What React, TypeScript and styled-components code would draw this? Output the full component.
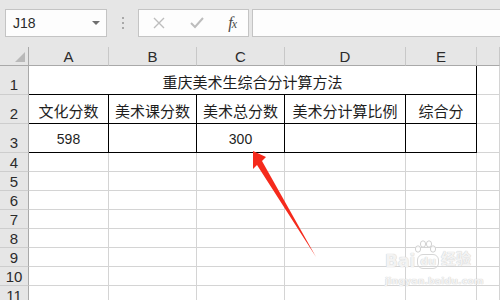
import React from "react";
import styled, { createGlobalStyle } from "styled-components";

const GlobalStyle = createGlobalStyle`
  html, body { margin: 0; padding: 0; background: #ffffff; }
  body { width: 500px; height: 300px; overflow: hidden; font-family: "Liberation Sans", Arial, sans-serif; }
  * { box-sizing: border-box; }
`;

const Page = styled.div`
  position: relative;
  width: 500px;
  height: 300px;
  overflow: hidden;
  display: flex;
  flex-direction: column;
`;

const Toolbar = styled.div`
  height: 47px;
  flex: none;
  background: #e6e6e6;
  display: flex;
  align-items: flex-start;
  padding: 9px 0 0 5px;
`;

const NameBox = styled.div`
  width: 102px;
  height: 28px;
  background: #fdfdfd;
  border: 1px solid #c4c4c4;
  display: flex;
  align-items: center;
  justify-content: space-between;
  padding: 0 6px 0 7px;
  font-size: 14px;
  color: #2a2a2a;
`;

const Caret = styled.span`
  width: 0;
  height: 0;
  border-left: 4px solid transparent;
  border-right: 4px solid transparent;
  border-top: 4px solid #6f6f6f;
`;

const Grip = styled.div`
  width: 31px;
  height: 28px;
  display: flex;
  flex-direction: column;
  align-items: center;
  justify-content: center;
  gap: 3px;
`;

const GripDot = styled.span`
  width: 2px;
  height: 2px;
  background: #a8a8a8;
`;

const FxBox = styled.div`
  width: 111px;
  height: 28px;
  background: #fdfdfd;
  border: 1px solid #c4c4c4;
  display: flex;
  align-items: center;
  justify-content: space-between;
  padding: 0 12px 0 14px;
`;

const FxLabel = styled.span`
  font-family: "Liberation Serif", "Times New Roman", serif;
  font-style: italic;
  font-size: 16px;
  color: #4a4a4a;
  letter-spacing: -1px;
  & > small { font-size: 12px; }
`;

const FormulaInput = styled.div`
  flex: 1;
  height: 28px;
  margin-left: 3px;
  margin-right: -4px;
  background: #fdfdfd;
  border: 1px solid #c4c4c4;
`;

const Sheet = styled.div`
  display: grid;
  grid-template-columns: 29px 80px 88px 88px 121px 71px 1fr;
  grid-template-rows: 19px 29px 29px 29px repeat(8, 19px);
  font-family: "Liberation Sans", Arial, "Noto Sans CJK SC", sans-serif;
`;

const Corner = styled.div`
  position: relative;
  background: #e6e6e6;
  border-right: 1px solid #a9a9a9;
  border-bottom: 1px solid #a9a9a9;
  &::after {
    content: "";
    position: absolute;
    right: 3px;
    bottom: 3px;
    width: 0;
    height: 0;
    border-left: 10px solid transparent;
    border-bottom: 10px solid #b9b9b9;
  }
`;

const ColHead = styled.div`
  background: #e6e6e6;
  border-right: 1px solid #c8c8c8;
  border-bottom: 1px solid #a9a9a9;
  display: flex;
  align-items: center;
  justify-content: center;
  font-size: 15px;
  color: #2b2b2b;
  padding-top: 1px;
`;

const RowHead = styled.div<{ $tall?: boolean }>`
  background: #e6e6e6;
  border-right: 1px solid #a9a9a9;
  border-bottom: 1px solid #cdcdcd;
  display: flex;
  align-items: flex-end;
  justify-content: center;
  font-size: 15px;
  line-height: 17px;
  color: #2b2b2b;
  padding-bottom: ${(p) => (p.$tall ? "1px" : "0")};
`;

const Cell = styled.div<{ $span?: number; $right?: "ink" | "grid"; $bottom?: "ink" | "grid"; $num?: boolean }>`
  grid-column: span ${(p) => p.$span ?? 1};
  background: #ffffff;
  border-right: 1px solid ${(p) => (p.$right === "ink" ? "#000000" : "#d4d4d4")};
  border-bottom: 1px solid ${(p) => (p.$bottom === "ink" ? "#000000" : "#d4d4d4")};
  display: flex;
  align-items: center;
  justify-content: center;
  padding-top: 2px;
  white-space: nowrap;
  color: #1e1e1e;
  font-family: ${(p) =>
    p.$num ? `"Liberation Sans", Arial, sans-serif` : `"Noto Sans CJK SC", "Microsoft YaHei", sans-serif`};
  font-size: ${(p) => (p.$num ? "14px" : "15px")};
`;

const Overlay = styled.svg`
  position: absolute;
  left: 0;
  top: 0;
  pointer-events: none;
`;

const Watermark = styled.div`
  position: absolute;
  left: 385px;
  top: 244px;
  width: 90px;
  display: flex;
  flex-direction: column;
  align-items: flex-start;
  pointer-events: none;
  white-space: nowrap;
  color: rgba(255, 255, 255, 0.75);
  text-shadow: 0 0 1px #cfcfcf, 0 0 1px #cfcfcf;
`;

const MarkRow = styled.div`
  display: flex;
  align-items: flex-end;
  font-family: "DejaVu Sans", sans-serif;
  font-weight: bold;
  font-size: 17px;
  line-height: 28px;
`;

const DuBadge = styled.span`
  position: relative;
  font-size: 11px;
  line-height: 13px;
  padding: 0 2px;
  margin: 0 2px 6px 2px;
  border-radius: 6px;
  border: 1px solid #d6d6d6;
`;

const Paw = styled.svg`
  position: absolute;
  left: -5px;
  top: -15px;
`;

const MarkCn = styled.span`
  font-family: "Noto Sans CJK SC", sans-serif;
  font-size: 15px;
  margin-bottom: 3px;
`;

const MarkUrl = styled.div`
  font-family: "DejaVu Sans", sans-serif;
  font-weight: bold;
  font-size: 9.5px;
  line-height: 12px;
`;

const cols = ["A", "B", "C", "D", "E", ""];
const headers = ["文化分数", "美术课分数", "美术总分数", "美术分计算比例", "综合分"];
const values = ["598", "", "300", "", ""];
const blankRows = [4, 5, 6, 7, 8, 9, 10, 11];

export default function App() {
  return (
    <Page>
      <GlobalStyle />
      <Toolbar>
        <NameBox>
          <span>J18</span>
          <Caret />
        </NameBox>
        <Grip>
          <GripDot />
          <GripDot />
          <GripDot />
        </Grip>
        <FxBox>
          <svg width="12" height="12" viewBox="0 0 12 12">
            <path d="M1 1 L11 11 M11 1 L1 11" stroke="#bdbdbd" strokeWidth="1.4" fill="none" />
          </svg>
          <svg width="14" height="12" viewBox="0 0 14 12">
            <path d="M1 6 L5 10 L13 1" stroke="#bdbdbd" strokeWidth="2" fill="none" />
          </svg>
          <FxLabel>
            f<small>x</small>
          </FxLabel>
        </FxBox>
        <FormulaInput />
      </Toolbar>
      <Sheet>
        <Corner />
        {cols.map((c, i) => (
          <ColHead key={"h" + i}>{c}</ColHead>
        ))}

        <RowHead $tall>1</RowHead>
        <Cell $span={5} $right="ink" $bottom="ink">
          重庆美术生综合分计算方法
        </Cell>
        <Cell />

        <RowHead $tall>2</RowHead>
        {headers.map((h) => (
          <Cell key={h} $right="ink" $bottom="ink">
            {h}
          </Cell>
        ))}
        <Cell />

        <RowHead $tall>3</RowHead>
        {values.map((v, i) => (
          <Cell key={"v" + i} $right="ink" $bottom="ink" $num>
            {v}
          </Cell>
        ))}
        <Cell />

        {blankRows.map((r) => (
          <React.Fragment key={r}>
            <RowHead>{r}</RowHead>
            {cols.map((_, i) => (
              <Cell key={r + "-" + i} />
            ))}
          </React.Fragment>
        ))}
      </Sheet>

      <Watermark>
        <MarkRow>
          <span>Bai</span>
          <DuBadge>
            <Paw width="24" height="16" viewBox="0 0 24 16">
              <g fill="rgba(255,255,255,0.8)" stroke="#d2d2d2" strokeWidth="1">
                <ellipse cx="5" cy="9" rx="2.6" ry="3.2" />
                <ellipse cx="10" cy="4" rx="2.6" ry="3.2" />
                <ellipse cx="16" cy="4" rx="2.6" ry="3.2" />
                <ellipse cx="20" cy="9" rx="2.6" ry="3.2" />
              </g>
            </Paw>
            du
          </DuBadge>
          <MarkCn>经验</MarkCn>
        </MarkRow>
        <MarkUrl>jingyan.baidu.com</MarkUrl>
      </Watermark>

      <Overlay width="500" height="300" viewBox="0 0 500 300">
        <polygon points="253,151 266,157 262,161 316,257 257,165 253,169" fill="#f52a1c" />
      </Overlay>
    </Page>
  );
}
